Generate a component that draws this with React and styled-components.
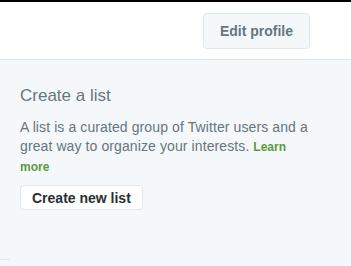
import React from "react";
import styled, { createGlobalStyle } from "styled-components";

const GlobalStyle = createGlobalStyle`
  html, body {
    margin: 0;
    padding: 0;
    background: #f5f8fa;
    font-family: "Liberation Sans", Arial, sans-serif;
    -webkit-font-smoothing: antialiased;
  }
`;

const Page = styled.div`
  width: 351px;
  height: 266px;
  overflow: hidden;
  display: flex;
  flex-direction: column;
  background: #f5f8fa;
  border-top: 2px solid #000;
  box-sizing: border-box;
`;

const Header = styled.div`
  height: 58px;
  background: #fff;
  border-bottom: 1px solid #e1e8ed;
  display: flex;
  align-items: flex-start;
  justify-content: flex-end;
  padding: 11px 41px 0 0;
  box-sizing: border-box;
`;

const Button = styled.button`
  font-family: "Liberation Sans", Arial, sans-serif;
  font-weight: bold;
  font-size: 14px;
  color: ${p => (p.muted ? "#66757f" : "#292f33")};
  background: ${p => (p.muted ? "#f5f8fa" : "#fff")};
  border: 1px solid #e1e8ed;
  border-radius: 4px;
  height: ${p => (p.muted ? "36px" : "25px")};
  padding: ${p => (p.muted ? "0 16px" : "0 11px")};
  cursor: pointer;
`;

const Module = styled.div`
  padding: 26px 20px 0 20px;
  display: flex;
  flex-direction: column;
  align-items: flex-start;
`;

const Title = styled.h3`
  margin: 0;
  font-size: 17px;
  font-weight: normal;
  color: #66757f;
  line-height: 20px;
`;

const Text = styled.p`
  width: 291px;
  margin: 12px 0 8px;
  font-size: 14px;
  line-height: 19px;
  letter-spacing: 0.1px;
  color: #66757f;
`;

const Learn = styled.a`
  font-size: 12px;
  font-weight: bold;
  letter-spacing: 0;
  color: #5a9a3a;
  text-decoration: none;
`;

const Corner = styled.div`
  margin-top: auto;
  margin-bottom: 6px;
  width: 10px;
  height: 1px;
  background: #e1e8ed;
`;

export default function App() {
  return (
    <>
      <GlobalStyle />
      <Page>
        <Header>
          <Button muted>Edit profile</Button>
        </Header>
        <Module>
          <Title>Create a list</Title>
          <Text>
            A list is a curated group of Twitter users and a great way to
            organize your interests. <Learn href="#">Learn more</Learn>
          </Text>
          <Button>Create new list</Button>
        </Module>
        <Corner />
      </Page>
    </>
  );
}
